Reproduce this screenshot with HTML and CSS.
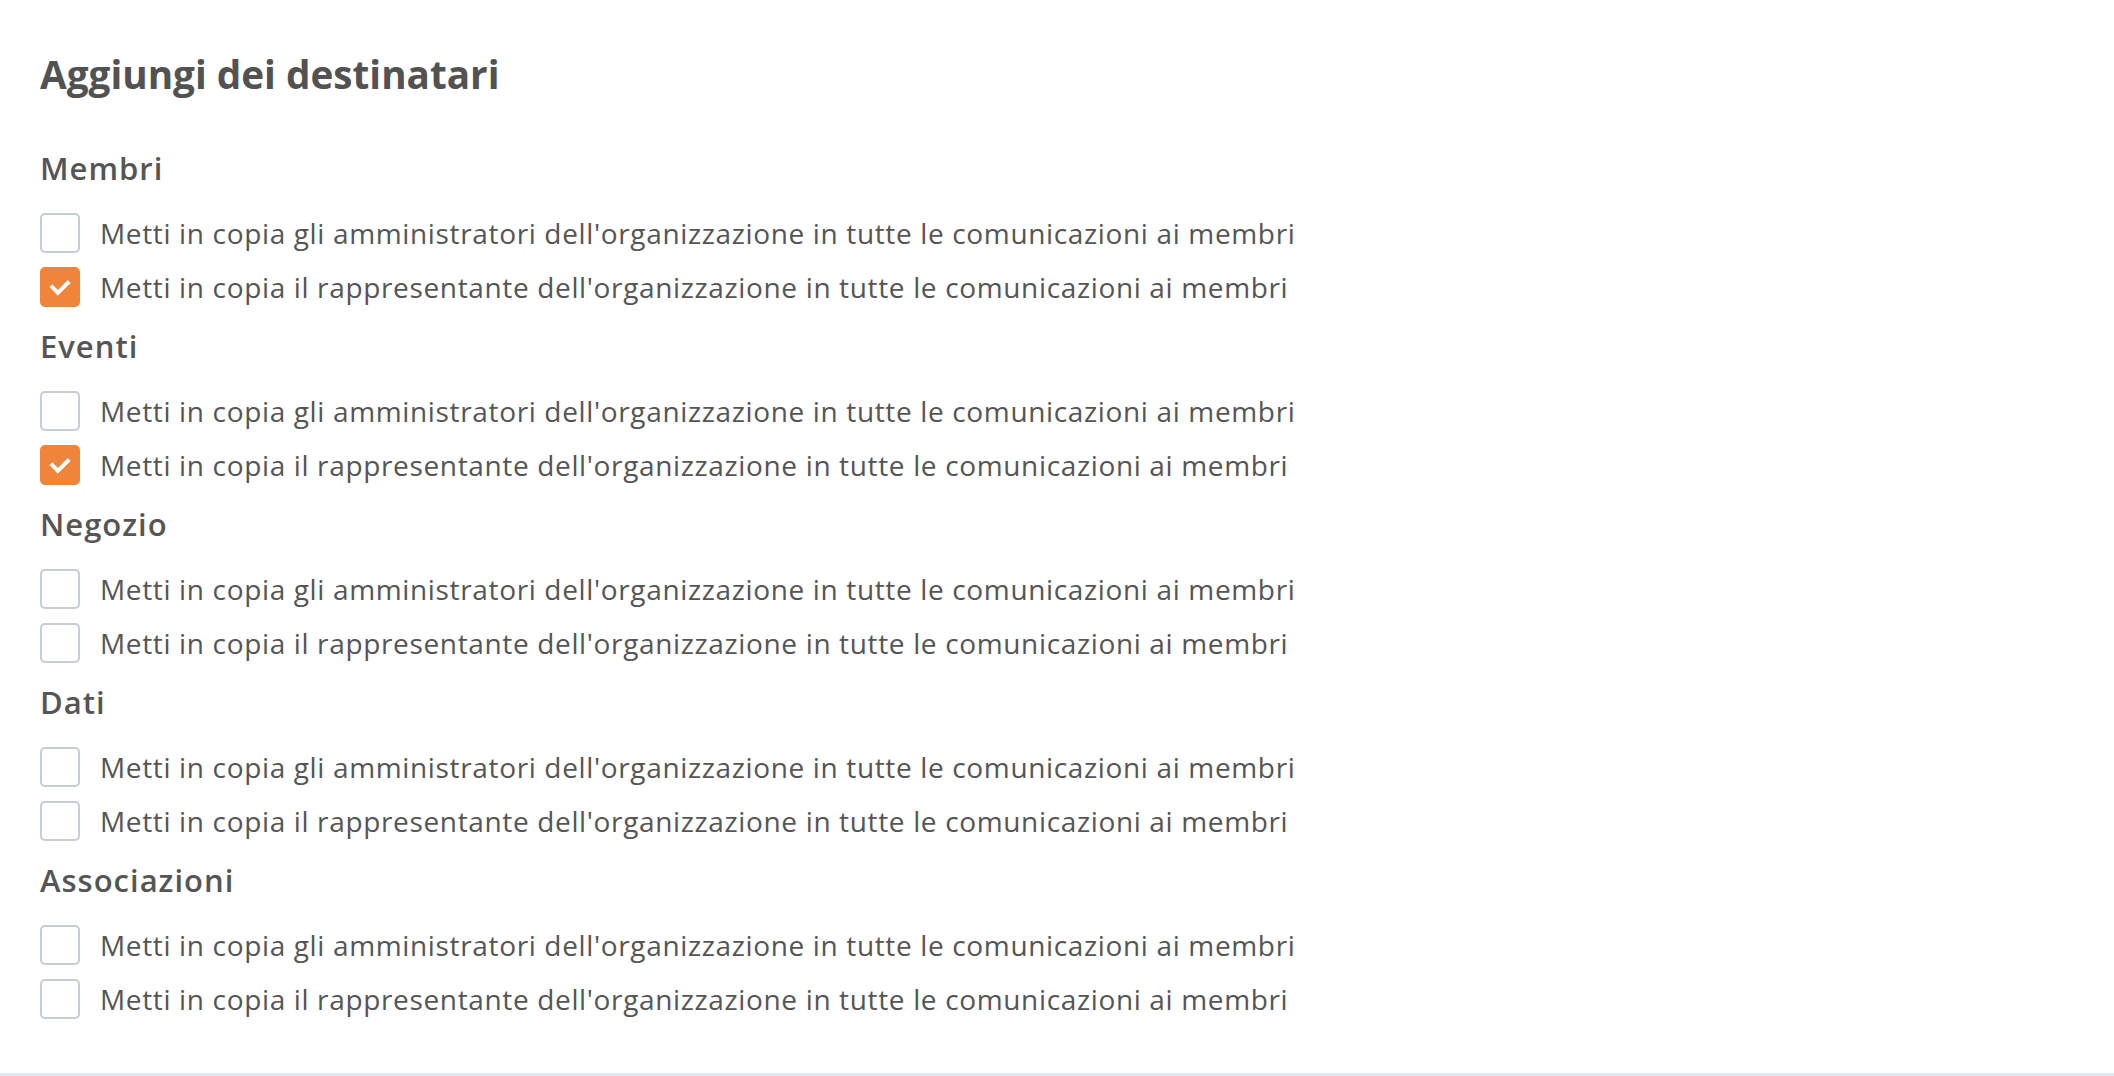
FILE: index.html
```html
<!DOCTYPE html>
<html lang="it">
  <head>
    <meta charset="UTF-8" />
    <meta name="viewport" content="width=device-width, initial-scale=1.0" />
    <title>Destinatari</title>
    <link rel="stylesheet" href="styles.css">
  </head>
  <body>
    <main class="pannello">
      <h1 class="titolo">Aggiungi dei destinatari</h1>

      <section class="gruppo">
        <h2>Membri</h2>
        <label class="voce"><input type="checkbox"><span class="casella"></span>Metti in copia gli amministratori dell'organizzazione in tutte le comunicazioni ai membri</label>
        <label class="voce"><input type="checkbox" checked><span class="casella"></span>Metti in copia il rappresentante dell'organizzazione in tutte le comunicazioni ai membri</label>
      </section>

      <section class="gruppo">
        <h2>Eventi</h2>
        <label class="voce"><input type="checkbox"><span class="casella"></span>Metti in copia gli amministratori dell'organizzazione in tutte le comunicazioni ai membri</label>
        <label class="voce"><input type="checkbox" checked><span class="casella"></span>Metti in copia il rappresentante dell'organizzazione in tutte le comunicazioni ai membri</label>
      </section>

      <section class="gruppo">
        <h2>Negozio</h2>
        <label class="voce"><input type="checkbox"><span class="casella"></span>Metti in copia gli amministratori dell'organizzazione in tutte le comunicazioni ai membri</label>
        <label class="voce"><input type="checkbox"><span class="casella"></span>Metti in copia il rappresentante dell'organizzazione in tutte le comunicazioni ai membri</label>
      </section>

      <section class="gruppo">
        <h2>Dati</h2>
        <label class="voce"><input type="checkbox"><span class="casella"></span>Metti in copia gli amministratori dell'organizzazione in tutte le comunicazioni ai membri</label>
        <label class="voce"><input type="checkbox"><span class="casella"></span>Metti in copia il rappresentante dell'organizzazione in tutte le comunicazioni ai membri</label>
      </section>

      <section class="gruppo">
        <h2>Associazioni</h2>
        <label class="voce"><input type="checkbox"><span class="casella"></span>Metti in copia gli amministratori dell'organizzazione in tutte le comunicazioni ai membri</label>
        <label class="voce"><input type="checkbox"><span class="casella"></span>Metti in copia il rappresentante dell'organizzazione in tutte le comunicazioni ai membri</label>
      </section>
    </main>
  </body>
</html>
```

FILE: styles.css
```css
* {
  box-sizing: border-box;
}

body {
  margin: 0;
  background-color: white;
  color: #555555;
  font-family: "Open Sans", Arial, sans-serif;
}

.pannello {
  min-height: 100vh;
  padding: 50px 40px 0 40px;
  border-bottom: 3px solid #e3e6f7;
  display: flex;
  flex-direction: column;
  gap: 19px;
}

.titolo {
  margin: 0 0 31px 0;
  font-size: 38.7px;
  line-height: 48px;
  font-weight: 700;
  color: #525252;
}

.gruppo {
  display: flex;
  flex-direction: column;
  gap: 14px;
}

.gruppo h2 {
  margin: 0 0 11px 0;
  font-size: 31px;
  line-height: 40px;
  font-weight: 600;
  letter-spacing: 1px;
}

.voce {
  display: flex;
  align-items: center;
  gap: 20px;
  height: 40px;
  font-size: 28px;
  letter-spacing: 0.65px;
  cursor: pointer;
}

.voce input {
  display: none;
}

/* la casella disegnata al posto di quella del browser */
.casella {
  flex: none;
  width: 40px;
  height: 40px;
  border: 2px solid #c7ccd9;
  border-radius: 5px;
  background-color: white;
  display: grid;
  place-content: center;
}

.voce input:checked + .casella {
  border-color: #f0853a;
  background-color: #f0853a;
}

.voce input:checked + .casella::after {
  content: "";
  width: 14px;
  height: 8px;
  margin-top: -4px;
  border-left: 4px solid white;
  border-bottom: 4px solid white;
  transform: rotate(-45deg);
}
```
